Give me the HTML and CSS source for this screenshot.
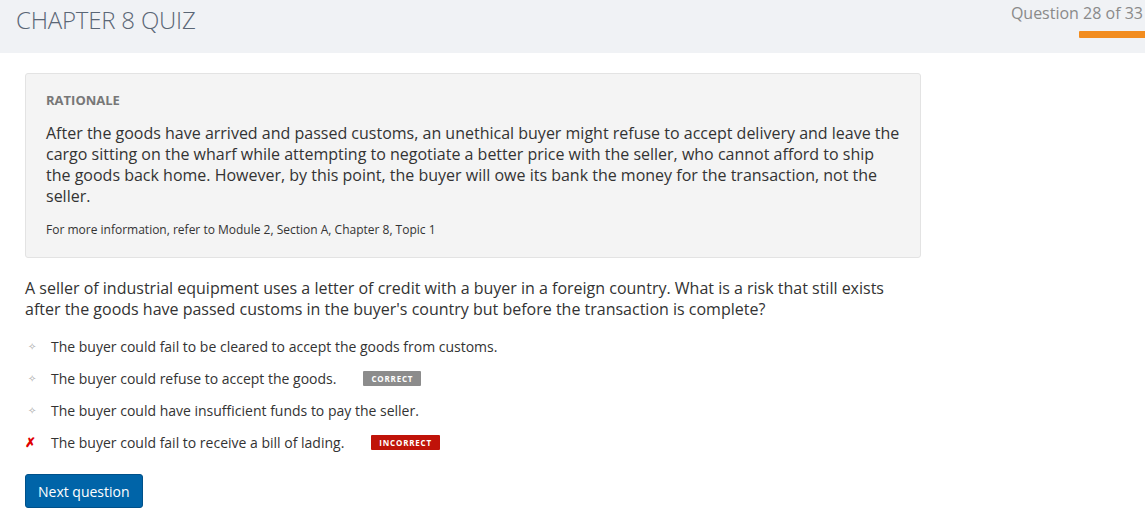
FILE: index.html
```html
<!DOCTYPE html>
<html>
<head>
<meta charset="utf-8">
<link rel="stylesheet" href="styles.css">
</head>
<body>
<header class="topbar">
  <h1 class="title">CHAPTER 8 QUIZ</h1>
  <div class="progress">
    <div class="progress-text">Question 28 of 33</div>
    <div class="progress-bar"></div>
  </div>
</header>
<main class="content">
  <section class="rationale">
    <div class="rationale-label">RATIONALE</div>
    <p class="rationale-text">After the goods have arrived and passed customs, an unethical buyer might refuse to accept delivery and leave the cargo sitting on the wharf while attempting to negotiate a better price with the seller, who cannot afford to ship the goods back home. However, by this point, the buyer will owe its bank the money for the transaction, not the seller.</p>
    <p class="rationale-ref">For more information, refer to Module 2, Section A, Chapter 8, Topic 1</p>
  </section>
  <p class="question">A seller of industrial equipment uses a letter of credit with a buyer in a foreign country. What is a risk that still exists after the goods have passed customs in the buyer's country but before the transaction is complete?</p>
  <ul class="options">
    <li class="option"><span class="mark dot">&#10023;</span><span class="opt-text">The buyer could fail to be cleared to accept the goods from customs.</span></li>
    <li class="option"><span class="mark dot">&#10023;</span><span class="opt-text">The buyer could refuse to accept the goods.</span><span class="badge badge-correct">CORRECT</span></li>
    <li class="option"><span class="mark dot">&#10023;</span><span class="opt-text">The buyer could have insufficient funds to pay the seller.</span></li>
    <li class="option"><span class="mark cross">&#10007;</span><span class="opt-text">The buyer could fail to receive a bill of lading.</span><span class="badge badge-incorrect">INCORRECT</span></li>
  </ul>
  <button class="next-btn">Next question</button>
</main>
</body>
</html>
```
FILE: styles.css
```css
* { box-sizing: border-box; }
html, body { margin: 0; padding: 0; }
body {
  font-family: "Open Sans", "Liberation Sans", sans-serif;
  color: #333;
  background: #fff;
  width: 1145px;
  overflow: hidden;
}
.topbar {
  background: #f0f2f5;
  height: 53px;
  display: flex;
  justify-content: space-between;
  align-items: flex-start;
}
.title {
  margin: 0;
  padding: 5px 0 0 16px;
  font-weight: 300;
  font-size: 24px;
  line-height: 30px;
  color: #5a6675;
  letter-spacing: -0.2px;
}
.progress {
  display: flex;
  flex-direction: column;
  align-items: flex-end;
  padding-top: 3px;
}
.progress-text {
  font-size: 16px;
  line-height: 20px;
  color: #8a8a8a;
  margin-right: 2px;
  white-space: nowrap;
}
.progress-bar {
  width: 66px;
  height: 7px;
  background: #f28c1e;
  margin-top: 8px;
  border-radius: 1px 0 0 1px;
}
.content {
  padding: 20px 0 0 25px;
}
.rationale {
  width: 896px;
  background: #f4f4f4;
  border: 1px solid #e3e3e3;
  border-radius: 3px;
  padding: 18px 20px 19px 20px;
}
.rationale-label {
  font-size: 13px;
  font-weight: 700;
  color: #777;
  line-height: 16px;
}
.rationale-text {
  margin: 15px 0 0 0;
  font-size: 16px;
  line-height: 21px;
  color: #333;
}
.rationale-ref {
  margin: 15px 0 0 0;
  font-size: 12px;
  line-height: 16px;
  color: #333;
}
.question {
  margin: 20px 0 0 0;
  width: 880px;
  font-size: 16px;
  line-height: 21px;
  color: #333;
}
.options {
  list-style: none;
  margin: 16px 0 0 0;
  padding: 0;
}
.option {
  display: flex;
  align-items: center;
  height: 32px;
  font-size: 14px;
  color: #333;
}
.option:first-child { margin-top: -6px; }
.mark {
  width: 26px;
  flex: none;
}
.dot {
  color: #aaa;
  font-size: 10px;
  padding-left: 3px;
}
.cross {
  color: #e00000;
  font-size: 13px;
  font-weight: 700;
  padding-left: 0;
}
.badge {
  display: inline-block;
  font-size: 8px;
  font-weight: 700;
  letter-spacing: 0.8px;
  color: #fff;
  line-height: 15px;
  height: 15px;
  padding: 0 8px;
  border-radius: 1px;
}
.badge-correct {
  background: #8c8c8c;
  margin-left: 27px;
}
.badge-incorrect {
  background: #c01309;
  margin-left: 27px;
}
.next-btn {
  margin-top: 16px;
  background: #0064a8;
  color: #fff;
  border: 1px solid #00518a;
  border-radius: 3px;
  font-family: "Open Sans", "Liberation Sans", sans-serif;
  font-size: 14px;
  height: 34px;
  padding: 0 12px;
  cursor: pointer;
}
```
